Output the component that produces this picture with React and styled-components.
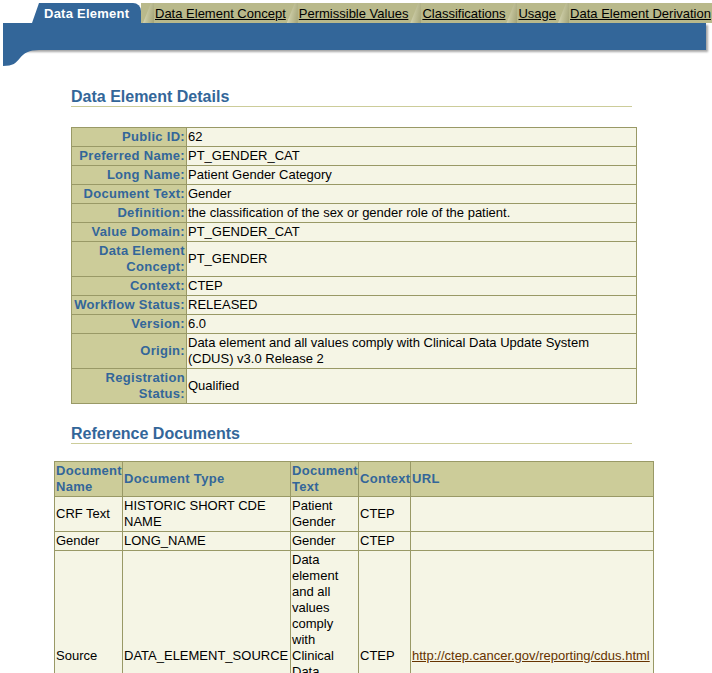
import React from "react";
import styled, { createGlobalStyle } from "styled-components";

const GlobalStyle = createGlobalStyle`
  body {
    margin: 0;
    background: #ffffff;
    font-family: "Liberation Sans", Arial, sans-serif;
    font-size: 13px;
    color: #000000;
  }
`;

const Header = styled.div`
  padding-top: 3px;
  overflow: hidden;
`;

const TabRow = styled.div`
  display: flex;
  height: 20px;
  margin-left: 32px;
  white-space: nowrap;
`;

const ActiveTab = styled.div`
  display: flex;
  align-items: center;
  flex: none;
  width: 109px;
  padding-left: 12px;
  box-sizing: border-box;
  background: #336699;
  border-top-right-radius: 8px;
  clip-path: polygon(0 100%, 7px 0, 100% 0, 100% 100%);
  color: #ffffff;
  font-weight: bold;
  font-size: 13px;
  letter-spacing: 0.25px;
`;

const Tab = styled.a`
  position: relative;
  display: flex;
  align-items: center;
  flex: none;
  padding: 0 1px 0 ${(p) => p.$pad || 13}px;
  background: #b9b98b;
  color: #000000;
  font-size: 13px;
  text-decoration: none;

  span {
    text-decoration: underline;
  }

  &::before {
    content: "";
    position: absolute;
    left: ${(p) => (p.$pad || 13) - 12}px;
    top: 0;
    width: 11px;
    height: 20px;
    background: linear-gradient(100deg, #e4e4cc 0%, #c4c49c 45%, #a3a377 100%);
    clip-path: polygon(0 100%, 8px 0, 100% 0, 100% 100%);
  }
`;

const TabFill = styled.div`
  flex: 1;
  background: #b9b98b;
`;

const Bar = styled.div`
  position: relative;
  height: 27px;
  margin: 0 6px 19px 3px;
  background: #336699;
  box-shadow: 2px 2px 2px rgba(0, 0, 0, 0.35);

  &::after {
    content: "";
    position: absolute;
    left: 0;
    top: 27px;
    width: 36px;
    height: 16px;
    background: #336699;
    clip-path: path("M0 0 H36 C26 0 21 3 17 8 C13 13 10 16 0 16 Z");
  }
`;

const Main = styled.div`
  width: 600px;
  margin: 18px 0 0 54px;
`;

const Heading = styled.h2`
  margin: ${(p) => p.$top || 0}px 22px 0 17px;
  padding: 0;
  font-size: 16px;
  line-height: 19px;
  font-weight: bold;
  color: #336699;
  border-bottom: 1px solid #cccc99;
`;

const Table = styled.table`
  border-collapse: collapse;
  table-layout: fixed;
  width: ${(p) => p.$width}px;
  margin: ${(p) => p.$gap}px 0 0 ${(p) => p.$indent || 0}px;
  border: 1px solid #999966;
  font-size: 13px;
  line-height: 16px;

  td,
  th {
    border: 1px solid #999966;
    padding: 1px;
    vertical-align: middle;
  }
`;

const Label = styled.th`
  background: #cccc99;
  color: #336699;
  font-weight: bold;
  text-align: right;
  letter-spacing: 0.3px;
`;

const Cell = styled.td`
  background: #f5f5e5;
  text-align: left;
`;

const HeadCell = styled.th`
  background: #cccc99;
  color: #336699;
  font-weight: bold;
  text-align: left;
  letter-spacing: 0.3px;
`;

const Link = styled.a`
  color: #663300;
  text-decoration: underline;
`;

const details = [
  ["Public ID:", "62"],
  ["Preferred Name:", "PT_GENDER_CAT"],
  ["Long Name:", "Patient Gender Category"],
  ["Document Text:", "Gender"],
  ["Definition:", "the classification of the sex or gender role of the patient."],
  ["Value Domain:", "PT_GENDER_CAT"],
  ["Data Element Concept:", "PT_GENDER"],
  ["Context:", "CTEP"],
  ["Workflow Status:", "RELEASED"],
  ["Version:", "6.0"],
  [
    "Origin:",
    "Data element and all values comply with Clinical Data Update System (CDUS) v3.0 Release 2",
  ],
  ["Registration Status:", "Qualified"],
];

const docs = [
  ["CRF Text", "HISTORIC SHORT CDE NAME", "Patient Gender", "CTEP", ""],
  ["Gender", "LONG_NAME", "Gender", "CTEP", ""],
  [
    "Source",
    "DATA_ELEMENT_SOURCE",
    "Data element and all values comply with Clinical Data Update System (CDUS) v3.0 Release 2",
    "CTEP",
    "http://ctep.cancer.gov/reporting/cdus.html",
  ],
];

const tabs = [
  { name: "Data Element Concept", pad: 14 },
  { name: "Permissible Values", pad: 12 },
  { name: "Classifications", pad: 13 },
  { name: "Usage", pad: 12 },
  { name: "Data Element Derivation", pad: 13 },
];

export default function App() {
  return (
    <>
      <GlobalStyle />
      <Header>
        <TabRow>
          <ActiveTab>Data Element</ActiveTab>
          {tabs.map((t) => (
            <Tab key={t.name} href="#" $pad={t.pad}>
              <span>{t.name}</span>
            </Tab>
          ))}
          <TabFill />
        </TabRow>
        <Bar />
      </Header>
      <Main>
        <Heading>Data Element Details</Heading>
        <Table $width={566} $gap={20} $indent={17}>
          <colgroup>
            <col style={{ width: 115 }} />
            <col />
          </colgroup>
          <tbody>
            {details.map(([k, v]) => (
              <tr key={k}>
                <Label>{k}</Label>
                <Cell>{v}</Cell>
              </tr>
            ))}
          </tbody>
        </Table>
        <Heading $top={20}>Reference Documents</Heading>
        <Table $width={600} $gap={17}>
          <colgroup>
            <col style={{ width: 68 }} />
            <col style={{ width: 168 }} />
            <col style={{ width: 68 }} />
            <col style={{ width: 52 }} />
            <col />
          </colgroup>
          <thead>
            <tr>
              <HeadCell>Document Name</HeadCell>
              <HeadCell>Document Type</HeadCell>
              <HeadCell>Document Text</HeadCell>
              <HeadCell>Context</HeadCell>
              <HeadCell>URL</HeadCell>
            </tr>
          </thead>
          <tbody>
            {docs.map((d) => (
              <tr key={d[0]}>
                <Cell>{d[0]}</Cell>
                <Cell>{d[1]}</Cell>
                <Cell>{d[2]}</Cell>
                <Cell>{d[3]}</Cell>
                <Cell>{d[4] && <Link href="#">{d[4]}</Link>}</Cell>
              </tr>
            ))}
          </tbody>
        </Table>
      </Main>
    </>
  );
}
